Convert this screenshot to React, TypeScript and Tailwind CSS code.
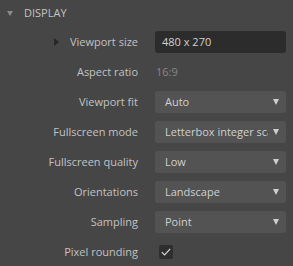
import { useState } from 'react';

type Row = {
  label: string;
  kind: 'input' | 'text' | 'select' | 'check';
  value?: string;
  expandable?: boolean;
};

const rows: Row[] = [
  { label: 'Viewport size', kind: 'input', value: '480 x 270', expandable: true },
  { label: 'Aspect ratio', kind: 'text', value: '16:9' },
  { label: 'Viewport fit', kind: 'select', value: 'Auto' },
  { label: 'Fullscreen mode', kind: 'select', value: 'Letterbox integer scale' },
  { label: 'Fullscreen quality', kind: 'select', value: 'Low' },
  { label: 'Orientations', kind: 'select', value: 'Landscape' },
  { label: 'Sampling', kind: 'select', value: 'Point' },
  { label: 'Pixel rounding', kind: 'check' },
];

const Caret = () => (
  <svg width="6" height="6" viewBox="0 0 6 6" className="absolute right-[7px] top-[8px]">
    <path d="M0 0 H6 L3 6 Z" fill="#cfcfcf" />
  </svg>
);

const Field = ({ row }: { row: Row }) => {
  const [checked, setChecked] = useState(true);

  if (row.kind === 'input') {
    return (
      <div className="h-[22px] rounded-[3px] bg-[#2c2c2c] px-[7px] flex items-center text-[#d0d0d0]">
        {row.value}
      </div>
    );
  }
  if (row.kind === 'text') {
    return <div className="px-[1px] text-[#868686]">{row.value}</div>;
  }
  if (row.kind === 'check') {
    return (
      <button
        onClick={() => setChecked((c) => !c)}
        className="ml-[4px] w-[14px] h-[14px] rounded-[2px] bg-[#2e2e2e] flex items-center justify-center"
      >
        {checked && (
          <svg width="10" height="8" viewBox="0 0 10 8">
            <path d="M0.8 4.2 L3.6 7 L9.2 0.8" stroke="#d8d8d8" strokeWidth="1.2" fill="none" />
          </svg>
        )}
      </button>
    );
  }
  return (
    <div className="relative h-[22px] rounded-[3px] bg-[#535353] pl-[10px] pr-[18px] flex items-center text-[#d0d0d0]">
      <span className="overflow-hidden whitespace-nowrap">{row.value}</span>
      <Caret />
    </div>
  );
};

export default function App() {
  return (
    <div className="w-[293px] h-[266px] bg-[#464646] overflow-hidden text-[11px] font-['Open_Sans',sans-serif] select-none">
      <div className="h-[27px] flex items-center pl-[7px]">
        <svg width="6" height="5" viewBox="0 0 6 5" className="mr-[11px]">
          <path d="M0 0 H6 L3 5 Z" fill="#8a8a8a" />
        </svg>
        <span className="text-[#c2c2c2]">DISPLAY</span>
      </div>
      {rows.map((row) => (
        <div key={row.label} className="h-[30px] grid grid-cols-[138px_131px] gap-x-[17px] items-center">
          <div className="flex items-center justify-end text-[#c2c2c2] whitespace-nowrap">
            {row.expandable && (
              <svg width="5" height="8" viewBox="0 0 5 8" className="mr-[11px]">
                <path d="M0 0 L5 4 L0 8 Z" fill="#262626" />
              </svg>
            )}
            {row.label}
          </div>
          <Field row={row} />
        </div>
      ))}
    </div>
  );
}
